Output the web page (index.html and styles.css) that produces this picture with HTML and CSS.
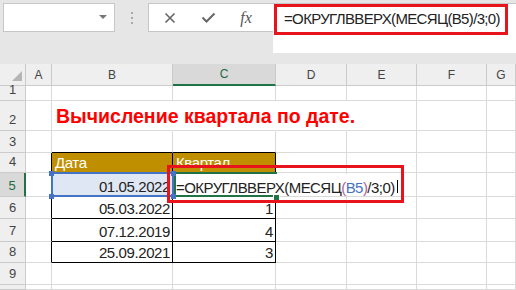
FILE: index.html
```html
<!DOCTYPE html>
<html>
<head>
  <title>Квартал по дате</title>
  <link rel="stylesheet" href="styles.css">
</head>
<body>
  <div class="toolbar">
    <div class="namebox"><span class="caret"></span></div>
    <div class="grip"><i></i><i></i><i></i></div>
    <div class="fxbar">
      <div class="fxbuttons">
        <span class="btn">
          <svg width="12" height="12" viewBox="0 0 12 12"><path d="M1.5 1.5l9 9M10.5 1.5l-9 9" stroke="#666" stroke-width="1.6" fill="none"/></svg>
        </span>
        <span class="btn">
          <svg width="15" height="11" viewBox="0 0 15 11"><path d="M1.5 5.5l4 4 8-8" stroke="#666" stroke-width="2" fill="none"/></svg>
        </span>
        <span class="btn fx">fx</span>
      </div>
      <div class="formula">=ОКРУГЛВВЕРХ(МЕСЯЦ(B5)/3;0)</div>
    </div>
  </div>
  <div class="callout callout-bar"></div>

  <div class="sheet" id="sheet"></div>

  <script>
    const cols = ['A', 'B', 'C', 'D', 'E', 'F', 'G'];
    const data = {
      B2: 'Вычисление квартала по дате.',
      B4: 'Дата', C4: 'Квартал',
      B5: '01.05.2022',
      B6: '05.03.2022', C6: '1',
      B7: '07.12.2019', C7: '4',
      B8: '25.09.2021', C8: '3',
      C5: '<div class="frame"></div><div class="fill-handle"></div>' +
          '<div class="editor">=ОКРУГЛВВЕРХ(МЕСЯЦ<span class="paren">(</span><span class="ref-text">B5</span><span class="paren">)</span>/3;0)<span class="cursor"></span></div>'
    };

    function classes(id) {
      const c = id[0];
      const r = Number(id.slice(1));
      const list = [];
      if (id === 'B2') list.push('title');
      if (['B2', 'C2', 'D2'].includes(id)) list.push('spill');
      if (c === 'A' && r >= 4 && r <= 8) list.push('edge-left');
      if ((c === 'B' || c === 'C') && r === 3) list.push('edge-top');
      if ((c === 'B' || c === 'C') && r >= 4 && r <= 8) list.push('tbl');
      if ((c === 'B' || c === 'C') && r === 4) list.push('gold');
      if ((c === 'B' || c === 'C') && r >= 5 && r <= 8) list.push('num');
      if (id === 'B5') list.push('ref');
      if (id === 'C5') list.push('editing');
      return list.join(' ');
    }

    function renderSheet() {
      let html = '<div class="hdr corner"><span class="tri"></span></div>';
      cols.forEach(c => {
        html += `<div class="hdr col${c === 'C' ? ' active' : ''}">${c}</div>`;
      });
      // row 10 is only a sliver at the bottom edge, so it gets no number
      for (let r = 1; r <= 10; r++) {
        const label = r < 10 ? r : '';
        html += `<div class="hdr row${r === 5 ? ' active' : ''}">${label}</div>`;
        cols.forEach(c => {
          const id = c + r;
          html += `<div class="cell ${classes(id)}">${data[id] || ''}</div>`;
        });
      }
      html += '<div class="refbox"><i class="h tl"></i><i class="h tr"></i><i class="h bl"></i><i class="h br"></i></div>';
      html += '<div class="callout callout-cell"></div>';
      document.getElementById('sheet').innerHTML = html;
    }

    renderSheet();
  </script>
</body>
</html>
```

FILE: styles.css
```css
body { margin: 0; width: 516px; height: 290px; overflow: hidden; position: relative; background: #e6e6e6; font-family: "Liberation Sans", Arial, sans-serif; color: #222; }

/* formula bar */
.toolbar { display: flex; align-items: flex-start; height: 64px; padding: 3px 0 0 3px; box-sizing: border-box; }
.namebox { width: 112px; height: 29px; box-sizing: border-box; background: #fff; border: 1px solid #c6c6c6; display: flex; align-items: center; justify-content: flex-end; padding: 0 7px 2px 0; }
.caret { width: 0; height: 0; border-left: 4px solid transparent; border-right: 4px solid transparent; border-top: 4px solid #777; }
.grip { width: 33px; height: 29px; display: flex; flex-direction: column; align-items: center; justify-content: center; gap: 3px; }
.grip i { width: 2px; height: 2px; background: #a9a9a9; }
.fxbar { flex: 1; display: flex; align-items: flex-start; }
.fxbuttons { width: 125px; height: 29px; box-sizing: border-box; background: #fff; border: 1px solid #c6c6c6; border-right: 0; display: flex; align-items: center; padding-left: 2px; }
.btn { width: 38px; display: flex; justify-content: center; align-items: center; }
.fx { font-family: "Liberation Serif", serif; font-style: italic; font-size: 16px; color: #555; }
.formula { flex: 1; height: 50px; box-sizing: border-box; background: #fff; border-top: 1px solid #c6c6c6; padding: 6px 0 0 11px; font-size: 15px; letter-spacing: -0.65px; white-space: nowrap; }

.callout { position: absolute; border: 3px solid #e8141b; box-sizing: border-box; }
.callout-bar { left: 274px; top: 4px; width: 234px; height: 31px; }
.callout-cell { left: 167px; top: 101px; width: 237px; height: 38px; z-index: 5; }

/* grid */
.sheet { position: relative; display: grid; grid-template-columns: 26px 26px 121px 103px 71px 70px 70px 29px; grid-template-rows: 22px 15px 30px 22px 20px 24px 22px 23px 21px 22px 5px; background: #fff; }

.hdr { background: #efefef; border-right: 1px solid #cbcbcb; border-bottom: 1px solid #cbcbcb; box-sizing: border-box; display: flex; justify-content: center; align-items: center; font-size: 12px; color: #444; }
.hdr.row { align-items: flex-end; padding-bottom: 3px; font-size: 13px; }
.hdr.active { background: #d9d9d9; color: #1d6b40; }
.hdr.col.active { border-bottom: 2px solid #217346; }
.hdr.row.active { border-right: 2px solid #217346; }
.corner { justify-content: flex-end; align-items: flex-end; padding: 0 3px 4px 0; }
.tri { width: 0; height: 0; border-left: 10px solid transparent; border-bottom: 10px solid #b5b5b5; }

.cell { border-right: 1px solid #dadada; border-bottom: 1px solid #dadada; box-sizing: border-box; display: flex; align-items: flex-end; padding: 0 3px 1px; font-size: 15px; letter-spacing: -0.4px; white-space: nowrap; min-width: 0; }
.cell.num { justify-content: flex-end; padding-right: 2px; }
.cell.spill { border-right-color: #fff; }
.cell.title { position: relative; z-index: 1; padding-left: 4px; padding-bottom: 2px; font-size: 19.5px; font-weight: bold; color: #f00; letter-spacing: 0; }
.cell.edge-left { border-right-color: #000; }
.cell.edge-top { border-bottom-color: #000; }
.cell.tbl { border-color: #000; }
.cell.gold { background: #bf8f00; color: #fff; }
.cell.ref { background: #dfe7f5; }
.cell.editing { position: relative; z-index: 2; }

.frame { position: absolute; left: 1px; top: -1px; width: 103px; height: 25px; border: 2px solid #217346; box-sizing: border-box; }
.fill-handle { position: absolute; right: -5px; bottom: -5px; width: 5px; height: 5px; background: #217346; border: 1px solid #fff; }
.editor { position: absolute; left: 3px; top: 1px; width: 222px; height: 21px; box-sizing: border-box; padding-top: 5px; line-height: 17px; letter-spacing: -0.55px; background: #fff; }
.paren { color: #b0609c; }
.ref-text { color: #4472c4; }
.cursor { display: inline-block; width: 1px; height: 13px; background: #000; margin-left: 2px; }

.refbox { position: absolute; left: 51px; top: 108px; width: 123px; height: 25px; border: 2px solid #4472c4; box-sizing: border-box; z-index: 3; }
.h { position: absolute; width: 5px; height: 5px; background: #4472c4; }
.tl { left: -4px; top: -3px; }
.tr { right: -4px; top: -3px; }
.bl { left: -4px; bottom: -4px; }
.br { right: -4px; bottom: -4px; }
```
